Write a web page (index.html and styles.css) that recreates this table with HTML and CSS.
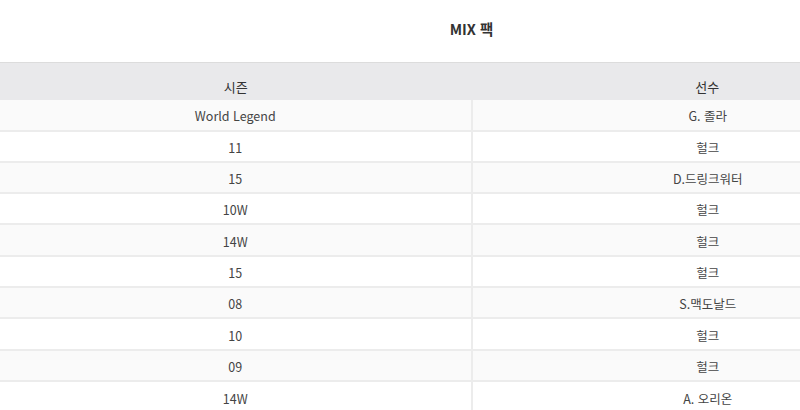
FILE: index.html
```html
<!DOCTYPE html>
<html lang="ko">
<head>
<meta charset="utf-8">
<link rel="stylesheet" href="styles.css">
</head>
<body>
<div class="wrap">
  <h1 class="title">MIX 팩</h1>
  <table class="pack">
    <thead>
      <tr><th>시즌</th><th>선수</th></tr>
    </thead>
    <tbody>
      <tr><td>World Legend</td><td>G. 졸라</td></tr>
      <tr><td>11</td><td>헐크</td></tr>
      <tr><td>15</td><td>D.드링크워터</td></tr>
      <tr><td>10W</td><td>헐크</td></tr>
      <tr><td>14W</td><td>헐크</td></tr>
      <tr><td>15</td><td>헐크</td></tr>
      <tr><td>08</td><td>S.맥도날드</td></tr>
      <tr><td>10</td><td>헐크</td></tr>
      <tr><td>09</td><td>헐크</td></tr>
      <tr><td>14W</td><td>A. 오리온</td></tr>
    </tbody>
  </table>
</div>
</body>
</html>
```

FILE: styles.css
```css
html, body {
  margin: 0;
  padding: 0;
  background: #fff;
  overflow: hidden;
}
body {
  font-family: "Noto Sans CJK KR", "Noto Sans", sans-serif;
  color: #444;
}
.wrap {
  width: 800px;
  overflow: hidden;
}
.title {
  margin: 0;
  width: 943px;
  height: 62px;
  line-height: 58px;
  text-align: center;
  font-size: 14.5px;
  font-weight: bold;
  color: #333;
}
.pack {
  width: 943px;
  border-collapse: collapse;
  table-layout: fixed;
  font-size: 12.5px;
}
.pack thead th {
  background: #e9e9eb;
  border-top: 1px solid #dcdcdc;
  height: 37px;
  padding: 11px 0 0;
  box-sizing: border-box;
  font-weight: normal;
  color: #333;
  font-size: 13px;
  line-height: 16px;
}
.pack td {
  height: 31.33px;
  padding: 3px 0 0;
  box-sizing: border-box;
  text-align: center;
  border-top: 2px solid #ececec;
  line-height: 16px;
}
.pack tbody tr:first-child td {
  border-top: none;
  height: 31px;
}
.pack td + td {
  border-left: 2px solid #ececec;
}
.pack tbody tr:nth-child(odd) {
  background: #fafafa;
}
.pack tbody tr:nth-child(even) {
  background: #fff;
}
```
